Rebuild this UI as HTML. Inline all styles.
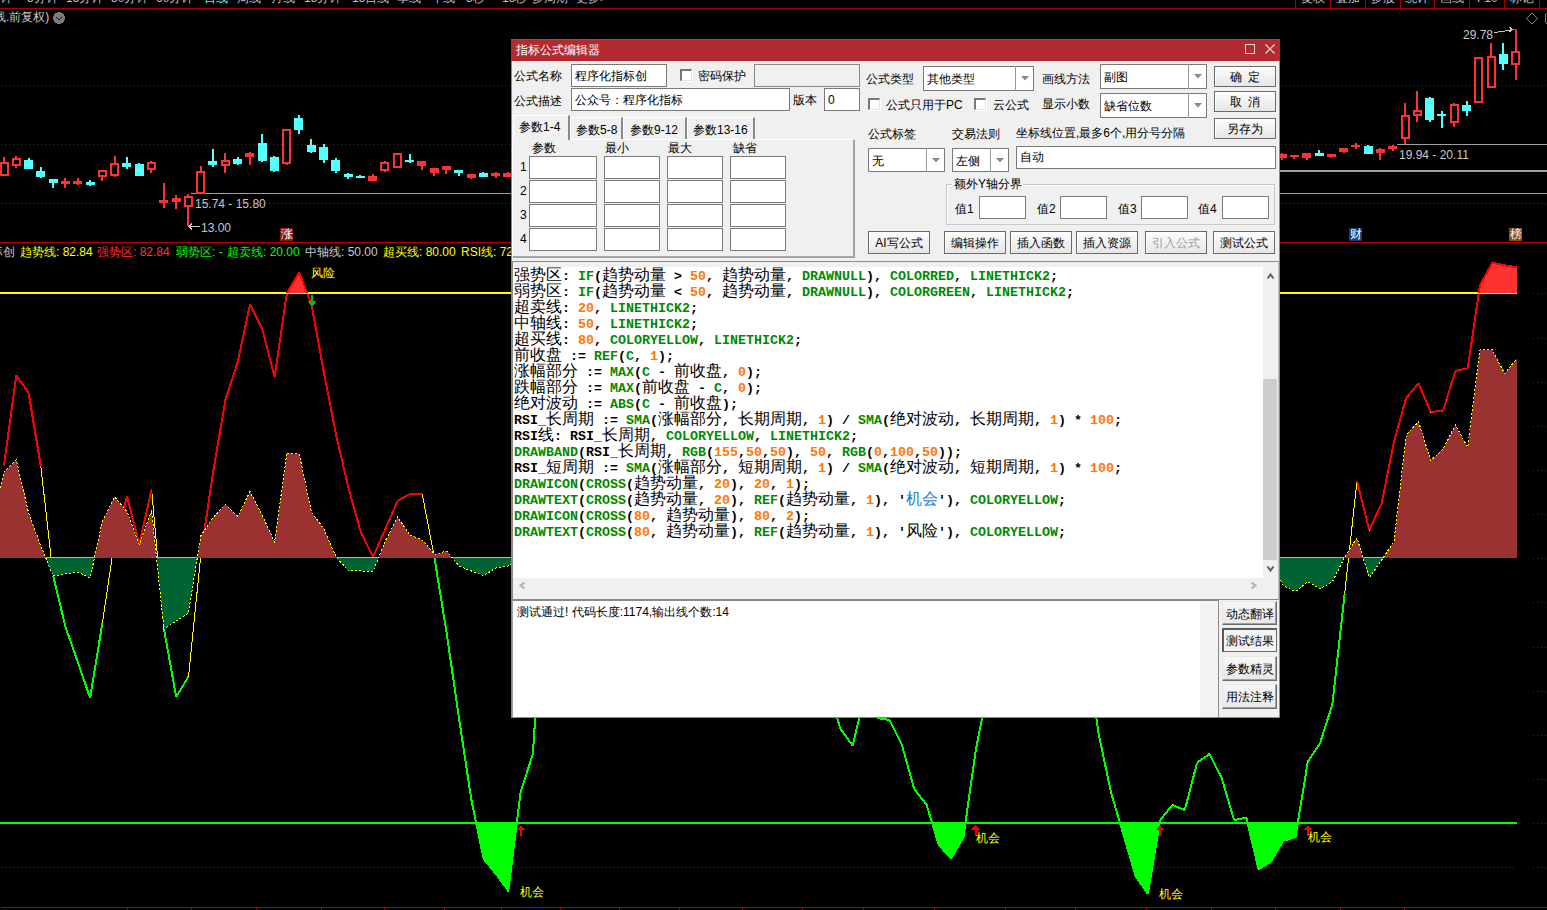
<!DOCTYPE html><html><head><meta charset="utf-8"><style>
html,body{margin:0;padding:0;background:#000;width:1547px;height:910px;overflow:hidden;position:relative}
.t{position:absolute;white-space:pre;line-height:16px;font-family:"Liberation Sans",sans-serif}
.cl{position:absolute;left:514px;white-space:pre;height:16px;line-height:16px;font-family:"Liberation Mono",monospace;font-weight:bold;font-size:13.333px;color:#000}
.cl .cj{font-family:"Liberation Sans",sans-serif;font-weight:normal;font-size:16px;line-height:16px}
</style></head><body><svg width="1547" height="910" style="position:absolute;left:0;top:0" shape-rendering="crispEdges">
<defs><clipPath id="above80"><rect x="0" y="0" width="1517" height="293.0"/></clipPath><clipPath id="below20"><rect x="0" y="823.0" width="1517" height="200"/></clipPath><clipPath id="above50"><rect x="0" y="243" width="1517" height="315"/></clipPath><clipPath id="below50"><rect x="0" y="557.5" width="1517" height="400"/></clipPath></defs>
<rect x="0" y="8" width="1547" height="1" fill="#a80000"/>
<rect x="1295" y="0" width="1" height="8" fill="#a80000"/>
<rect x="1330" y="0" width="1" height="8" fill="#a80000"/>
<rect x="1365" y="0" width="1" height="8" fill="#a80000"/>
<rect x="1400" y="0" width="1" height="8" fill="#a80000"/>
<rect x="1434" y="0" width="1" height="8" fill="#a80000"/>
<rect x="1469" y="0" width="1" height="8" fill="#a80000"/>
<rect x="1504" y="0" width="1" height="8" fill="#a80000"/>
<rect x="1539" y="0" width="1" height="8" fill="#a80000"/>
<line x1="1" y1="85.5" x2="1547" y2="85.5" stroke="#c00000" stroke-width="1" stroke-dasharray="1,3"/>
<line x1="1" y1="144.5" x2="1547" y2="144.5" stroke="#c00000" stroke-width="1" stroke-dasharray="1,3"/>
<line x1="1" y1="203.5" x2="1547" y2="203.5" stroke="#c00000" stroke-width="1" stroke-dasharray="1,3"/>
<rect x="191" y="193" width="1356" height="1" fill="#a0a0a0"/>
<rect x="1397" y="144" width="150" height="1" fill="#a0a0a0"/>
<rect x="1280" y="170" width="267" height="2" fill="#a0a0a0"/>
<rect x="3" y="157" width="2" height="19" fill="#ff3232"/>
<rect x="1" y="163" width="7" height="12" fill="#000" stroke="#ff3232" stroke-width="2"/>
<rect x="15" y="156" width="2" height="12" fill="#ff3232"/>
<rect x="13" y="159" width="7" height="6" fill="#000" stroke="#ff3232" stroke-width="2"/>
<rect x="28" y="158" width="2" height="11" fill="#54ffff"/>
<rect x="24" y="160" width="9" height="9" fill="#54ffff"/>
<rect x="40" y="167" width="2" height="11" fill="#54ffff"/>
<rect x="36" y="171" width="9" height="6" fill="#54ffff"/>
<rect x="52" y="179" width="2" height="9" fill="#54ffff"/>
<rect x="49" y="179" width="9" height="4" fill="#54ffff"/>
<rect x="64" y="178" width="2" height="10" fill="#ff3232"/>
<rect x="61" y="181" width="9" height="3" fill="#ff3232"/>
<rect x="77" y="178" width="2" height="7" fill="#ff3232"/>
<rect x="73" y="181" width="9" height="3" fill="#ff3232"/>
<rect x="89" y="180" width="2" height="6" fill="#54ffff"/>
<rect x="86" y="182" width="9" height="3" fill="#54ffff"/>
<rect x="101" y="170" width="2" height="11" fill="#ff3232"/>
<rect x="99" y="171" width="7" height="5" fill="#000" stroke="#ff3232" stroke-width="2"/>
<rect x="114" y="156" width="2" height="21" fill="#ff3232"/>
<rect x="111" y="164" width="7" height="11" fill="#000" stroke="#ff3232" stroke-width="2"/>
<rect x="126" y="157" width="2" height="12" fill="#54ffff"/>
<rect x="122" y="163" width="9" height="4" fill="#54ffff"/>
<rect x="138" y="163" width="2" height="13" fill="#54ffff"/>
<rect x="135" y="164" width="9" height="12" fill="#54ffff"/>
<rect x="150" y="161" width="2" height="12" fill="#ff3232"/>
<rect x="148" y="163" width="7" height="6" fill="#000" stroke="#ff3232" stroke-width="2"/>
<rect x="163" y="183" width="2" height="25" fill="#ff3232"/>
<rect x="159" y="200" width="9" height="3" fill="#ff3232"/>
<rect x="175" y="195" width="2" height="14" fill="#ff3232"/>
<rect x="172" y="198" width="9" height="4" fill="#ff3232"/>
<rect x="187" y="194" width="2" height="32" fill="#ff3232"/>
<rect x="185" y="197" width="7" height="9" fill="#000" stroke="#ff3232" stroke-width="2"/>
<rect x="200" y="166" width="2" height="28" fill="#ff3232"/>
<rect x="197" y="172" width="7" height="21" fill="#000" stroke="#ff3232" stroke-width="2"/>
<rect x="212" y="149" width="2" height="18" fill="#54ffff"/>
<rect x="208" y="161" width="9" height="4" fill="#54ffff"/>
<rect x="224" y="153" width="2" height="20" fill="#ff3232"/>
<rect x="222" y="161" width="7" height="4" fill="#000" stroke="#ff3232" stroke-width="2"/>
<rect x="237" y="157" width="2" height="8" fill="#54ffff"/>
<rect x="233" y="159" width="9" height="5" fill="#54ffff"/>
<rect x="249" y="152" width="2" height="13" fill="#ff3232"/>
<rect x="245" y="153" width="9" height="4" fill="#ff3232"/>
<rect x="261" y="134" width="2" height="28" fill="#54ffff"/>
<rect x="258" y="143" width="9" height="18" fill="#54ffff"/>
<rect x="273" y="156" width="2" height="16" fill="#54ffff"/>
<rect x="270" y="157" width="9" height="14" fill="#54ffff"/>
<rect x="286" y="129" width="2" height="36" fill="#ff3232"/>
<rect x="283" y="130" width="7" height="33" fill="#000" stroke="#ff3232" stroke-width="2"/>
<rect x="298" y="115" width="2" height="19" fill="#54ffff"/>
<rect x="294" y="118" width="9" height="12" fill="#54ffff"/>
<rect x="310" y="139" width="2" height="14" fill="#54ffff"/>
<rect x="307" y="145" width="9" height="7" fill="#54ffff"/>
<rect x="323" y="144" width="2" height="19" fill="#54ffff"/>
<rect x="319" y="147" width="9" height="13" fill="#54ffff"/>
<rect x="335" y="158" width="2" height="15" fill="#54ffff"/>
<rect x="331" y="160" width="9" height="11" fill="#54ffff"/>
<rect x="347" y="173" width="2" height="6" fill="#54ffff"/>
<rect x="344" y="174" width="9" height="3" fill="#54ffff"/>
<rect x="359" y="175" width="2" height="3" fill="#54ffff"/>
<rect x="356" y="176" width="9" height="2" fill="#54ffff"/>
<rect x="372" y="174" width="2" height="7" fill="#ff3232"/>
<rect x="368" y="176" width="9" height="5" fill="#ff3232"/>
<rect x="384" y="161" width="2" height="11" fill="#ff3232"/>
<rect x="381" y="163" width="7" height="7" fill="#000" stroke="#ff3232" stroke-width="2"/>
<rect x="396" y="153" width="2" height="15" fill="#ff3232"/>
<rect x="394" y="154" width="7" height="13" fill="#000" stroke="#ff3232" stroke-width="2"/>
<rect x="409" y="154" width="2" height="9" fill="#54ffff"/>
<rect x="405" y="160" width="9" height="2" fill="#54ffff"/>
<rect x="421" y="161" width="2" height="9" fill="#ff3232"/>
<rect x="417" y="161" width="9" height="5" fill="#ff3232"/>
<rect x="433" y="168" width="2" height="8" fill="#ff3232"/>
<rect x="430" y="168" width="9" height="5" fill="#ff3232"/>
<rect x="445" y="166" width="2" height="8" fill="#ff3232"/>
<rect x="442" y="166" width="9" height="4" fill="#ff3232"/>
<rect x="458" y="170" width="2" height="6" fill="#54ffff"/>
<rect x="454" y="170" width="9" height="3" fill="#54ffff"/>
<rect x="470" y="174" width="2" height="5" fill="#ff3232"/>
<rect x="467" y="174" width="9" height="4" fill="#ff3232"/>
<rect x="482" y="172" width="2" height="5" fill="#54ffff"/>
<rect x="479" y="173" width="9" height="4" fill="#54ffff"/>
<rect x="495" y="172" width="2" height="6" fill="#ff3232"/>
<rect x="491" y="173" width="9" height="3" fill="#ff3232"/>
<rect x="507" y="172" width="2" height="5" fill="#ff3232"/>
<rect x="503" y="173" width="9" height="4" fill="#ff3232"/>
<rect x="1281" y="153" width="2" height="7" fill="#ff3232"/>
<rect x="1278" y="154" width="9" height="4" fill="#ff3232"/>
<rect x="1293" y="155" width="2" height="4" fill="#ff3232"/>
<rect x="1290" y="155" width="9" height="2" fill="#ff3232"/>
<rect x="1306" y="153" width="2" height="7" fill="#ff3232"/>
<rect x="1302" y="153" width="9" height="5" fill="#ff3232"/>
<rect x="1318" y="150" width="2" height="6" fill="#54ffff"/>
<rect x="1315" y="153" width="9" height="3" fill="#54ffff"/>
<rect x="1330" y="154" width="2" height="4" fill="#ff3232"/>
<rect x="1327" y="154" width="9" height="3" fill="#ff3232"/>
<rect x="1343" y="148" width="2" height="5" fill="#ff3232"/>
<rect x="1339" y="148" width="9" height="4" fill="#ff3232"/>
<rect x="1355" y="143" width="2" height="6" fill="#ff3232"/>
<rect x="1351" y="145" width="9" height="2" fill="#ff3232"/>
<rect x="1367" y="145" width="2" height="9" fill="#54ffff"/>
<rect x="1364" y="146" width="9" height="8" fill="#54ffff"/>
<rect x="1379" y="148" width="2" height="12" fill="#ff3232"/>
<rect x="1376" y="149" width="9" height="4" fill="#ff3232"/>
<rect x="1392" y="145" width="2" height="6" fill="#ff3232"/>
<rect x="1388" y="146" width="9" height="3" fill="#ff3232"/>
<rect x="1404" y="103" width="2" height="41" fill="#ff3232"/>
<rect x="1402" y="116" width="7" height="22" fill="#000" stroke="#ff3232" stroke-width="2"/>
<rect x="1416" y="91" width="2" height="31" fill="#ff3232"/>
<rect x="1414" y="111" width="7" height="4" fill="#000" stroke="#ff3232" stroke-width="2"/>
<rect x="1429" y="97" width="2" height="25" fill="#54ffff"/>
<rect x="1425" y="98" width="9" height="22" fill="#54ffff"/>
<rect x="1441" y="111" width="2" height="17" fill="#54ffff"/>
<rect x="1437" y="114" width="9" height="2" fill="#54ffff"/>
<rect x="1453" y="103" width="2" height="24" fill="#ff3232"/>
<rect x="1451" y="105" width="7" height="17" fill="#000" stroke="#ff3232" stroke-width="2"/>
<rect x="1466" y="101" width="2" height="15" fill="#54ffff"/>
<rect x="1462" y="105" width="9" height="6" fill="#54ffff"/>
<rect x="1478" y="57" width="2" height="46" fill="#ff3232"/>
<rect x="1475" y="58" width="7" height="44" fill="#000" stroke="#ff3232" stroke-width="2"/>
<rect x="1490" y="43" width="2" height="45" fill="#ff3232"/>
<rect x="1488" y="57" width="7" height="30" fill="#000" stroke="#ff3232" stroke-width="2"/>
<rect x="1502" y="43" width="2" height="27" fill="#54ffff"/>
<rect x="1499" y="54" width="9" height="10" fill="#54ffff"/>
<rect x="1515" y="29" width="2" height="51" fill="#ff3232"/>
<rect x="1512" y="52" width="7" height="12" fill="#000" stroke="#ff3232" stroke-width="2"/>
<rect x="0" y="242" width="1547" height="1" fill="#b00000"/>
<line x1="1" y1="867.5" x2="1517" y2="867.5" stroke="#c00000" stroke-width="1" stroke-dasharray="1,3"/>
<line x1="1533" y1="293.5" x2="1547" y2="293.5" stroke="#c00000" stroke-width="1" stroke-dasharray="1,3"/>
<line x1="1533" y1="338.5" x2="1547" y2="338.5" stroke="#c00000" stroke-width="1" stroke-dasharray="1,3"/>
<line x1="1533" y1="382.5" x2="1547" y2="382.5" stroke="#c00000" stroke-width="1" stroke-dasharray="1,3"/>
<line x1="1533" y1="426.5" x2="1547" y2="426.5" stroke="#c00000" stroke-width="1" stroke-dasharray="1,3"/>
<line x1="1533" y1="470.5" x2="1547" y2="470.5" stroke="#c00000" stroke-width="1" stroke-dasharray="1,3"/>
<line x1="1533" y1="514.5" x2="1547" y2="514.5" stroke="#c00000" stroke-width="1" stroke-dasharray="1,3"/>
<line x1="1533" y1="558.5" x2="1547" y2="558.5" stroke="#c00000" stroke-width="1" stroke-dasharray="1,3"/>
<line x1="1533" y1="602.5" x2="1547" y2="602.5" stroke="#c00000" stroke-width="1" stroke-dasharray="1,3"/>
<line x1="1533" y1="647.5" x2="1547" y2="647.5" stroke="#c00000" stroke-width="1" stroke-dasharray="1,3"/>
<line x1="1533" y1="691.5" x2="1547" y2="691.5" stroke="#c00000" stroke-width="1" stroke-dasharray="1,3"/>
<line x1="1533" y1="735.5" x2="1547" y2="735.5" stroke="#c00000" stroke-width="1" stroke-dasharray="1,3"/>
<line x1="1533" y1="779.5" x2="1547" y2="779.5" stroke="#c00000" stroke-width="1" stroke-dasharray="1,3"/>
<line x1="1533" y1="823.5" x2="1547" y2="823.5" stroke="#c00000" stroke-width="1" stroke-dasharray="1,3"/>
<line x1="1533" y1="867.5" x2="1547" y2="867.5" stroke="#c00000" stroke-width="1" stroke-dasharray="1,3"/>
<polyline points="4.0,465.5 16.3,375.3 28.6,393.0 40.9,466.8 53.2,576.0 65.5,627.0 77.8,662.0 90.1,698.0 102.4,623.0 114.7,540.0 127.0,496.6 139.3,544.3 151.6,489.4 163.9,628.6 176.2,697.0 188.5,676.6 200.8,555.0 213.1,472.0 225.4,400.0 237.7,362.0 250.0,304.5 262.3,329.0 274.6,377.0 286.9,293.0 299.2,272.5 311.5,304.5 323.8,372.0 336.1,434.8 348.4,487.6 360.7,532.0 373.0,557.0 385.3,529.0 397.6,500.8 409.9,494.0 422.2,494.0 434.5,558.0 446.8,634.0 459.1,719.0 471.4,800.0 483.7,859.0 496.0,874.0 508.3,891.0 520.6,792.0 532.9,754.0 545.2,560.0 557.5,500.0 569.8,500.0 582.1,500.0 594.4,500.0 606.7,500.0 619.0,500.0 631.3,500.0 643.6,500.0 655.9,500.0 668.2,500.0 680.5,500.0 692.8,500.0 705.1,500.0 717.4,500.0 729.7,500.0 742.0,500.0 754.3,500.0 766.6,500.0 778.9,500.0 791.2,500.0 803.5,500.0 815.8,500.0 828.1,688.0 840.4,728.7 852.7,745.6 865.0,693.0 877.3,718.0 889.6,720.0 901.9,745.0 914.2,789.0 926.5,804.5 938.8,845.0 951.1,858.4 963.4,837.5 975.7,750.7 988.0,688.0 1000.3,550.0 1012.6,550.0 1024.9,550.0 1037.2,550.0 1049.5,550.0 1061.8,550.0 1074.1,550.0 1086.4,648.0 1098.7,734.0 1111.0,792.4 1123.3,834.0 1135.6,876.0 1147.9,894.0 1160.2,820.0 1172.5,805.0 1184.8,810.0 1197.1,762.7 1209.4,754.0 1221.7,778.0 1234.0,820.0 1246.3,817.7 1258.6,869.3 1270.9,861.6 1283.2,840.8 1295.5,837.0 1307.8,761.6 1320.1,743.0 1332.4,704.3 1344.7,593.5 1357.0,480.8 1369.3,530.0 1381.6,503.6 1393.9,442.0 1406.2,398.0 1418.5,383.4 1430.8,412.0 1443.1,410.5 1455.4,370.8 1467.7,368.3 1480.0,285.0 1492.3,262.8 1504.6,265.3 1516.9,267.4" fill="none" stroke="#ffff00" stroke-width="1"/>
<path d="M4.0,465.5 L16.3,375.3 M16.3,375.3 L28.6,393.0 M28.6,393.0 L40.9,466.8 M114.7,540.0 L127.0,496.6 M127.0,496.6 L139.3,544.3 M139.3,544.3 L151.6,489.4 M200.8,555.0 L213.1,472.0 M213.1,472.0 L225.4,400.0 M225.4,400.0 L237.7,362.0 M237.7,362.0 L250.0,304.5 M250.0,304.5 L262.3,329.0 M262.3,329.0 L274.6,377.0 M274.6,377.0 L286.9,293.0 M286.9,293.0 L299.2,272.5 M299.2,272.5 L311.5,304.5 M311.5,304.5 L323.8,372.0 M323.8,372.0 L336.1,434.8 M336.1,434.8 L348.4,487.6 M348.4,487.6 L360.7,532.0 M360.7,532.0 L373.0,557.0 M373.0,557.0 L385.3,529.0 M385.3,529.0 L397.6,500.8 M397.6,500.8 L409.9,494.0 M409.9,494.0 L422.2,494.0 M557.5,500.0 L569.8,500.0 M569.8,500.0 L582.1,500.0 M582.1,500.0 L594.4,500.0 M594.4,500.0 L606.7,500.0 M606.7,500.0 L619.0,500.0 M619.0,500.0 L631.3,500.0 M631.3,500.0 L643.6,500.0 M643.6,500.0 L655.9,500.0 M655.9,500.0 L668.2,500.0 M668.2,500.0 L680.5,500.0 M680.5,500.0 L692.8,500.0 M692.8,500.0 L705.1,500.0 M705.1,500.0 L717.4,500.0 M717.4,500.0 L729.7,500.0 M729.7,500.0 L742.0,500.0 M742.0,500.0 L754.3,500.0 M754.3,500.0 L766.6,500.0 M766.6,500.0 L778.9,500.0 M778.9,500.0 L791.2,500.0 M791.2,500.0 L803.5,500.0 M803.5,500.0 L815.8,500.0 M1000.3,550.0 L1012.6,550.0 M1012.6,550.0 L1024.9,550.0 M1024.9,550.0 L1037.2,550.0 M1037.2,550.0 L1049.5,550.0 M1049.5,550.0 L1061.8,550.0 M1061.8,550.0 L1074.1,550.0 M1357.0,480.8 L1369.3,530.0 M1369.3,530.0 L1381.6,503.6 M1381.6,503.6 L1393.9,442.0 M1393.9,442.0 L1406.2,398.0 M1406.2,398.0 L1418.5,383.4 M1418.5,383.4 L1430.8,412.0 M1430.8,412.0 L1443.1,410.5 M1443.1,410.5 L1455.4,370.8 M1455.4,370.8 L1467.7,368.3 M1467.7,368.3 L1480.0,285.0 M1480.0,285.0 L1492.3,262.8 M1492.3,262.8 L1504.6,265.3 M1504.6,265.3 L1516.9,267.4" fill="none" stroke="#ff0000" stroke-width="2" stroke-linejoin="round"/>
<path d="M53.2,576.0 L65.5,627.0 M65.5,627.0 L77.8,662.0 M77.8,662.0 L90.1,698.0 M90.1,698.0 L102.4,623.0 M163.9,628.6 L176.2,697.0 M176.2,697.0 L188.5,676.6 M434.5,558.0 L446.8,634.0 M446.8,634.0 L459.1,719.0 M459.1,719.0 L471.4,800.0 M471.4,800.0 L483.7,859.0 M483.7,859.0 L496.0,874.0 M496.0,874.0 L508.3,891.0 M508.3,891.0 L520.6,792.0 M520.6,792.0 L532.9,754.0 M532.9,754.0 L545.2,560.0 M828.1,688.0 L840.4,728.7 M840.4,728.7 L852.7,745.6 M852.7,745.6 L865.0,693.0 M865.0,693.0 L877.3,718.0 M877.3,718.0 L889.6,720.0 M889.6,720.0 L901.9,745.0 M901.9,745.0 L914.2,789.0 M914.2,789.0 L926.5,804.5 M926.5,804.5 L938.8,845.0 M938.8,845.0 L951.1,858.4 M951.1,858.4 L963.4,837.5 M963.4,837.5 L975.7,750.7 M975.7,750.7 L988.0,688.0 M1086.4,648.0 L1098.7,734.0 M1098.7,734.0 L1111.0,792.4 M1111.0,792.4 L1123.3,834.0 M1123.3,834.0 L1135.6,876.0 M1135.6,876.0 L1147.9,894.0 M1147.9,894.0 L1160.2,820.0 M1160.2,820.0 L1172.5,805.0 M1172.5,805.0 L1184.8,810.0 M1184.8,810.0 L1197.1,762.7 M1197.1,762.7 L1209.4,754.0 M1209.4,754.0 L1221.7,778.0 M1221.7,778.0 L1234.0,820.0 M1234.0,820.0 L1246.3,817.7 M1246.3,817.7 L1258.6,869.3 M1258.6,869.3 L1270.9,861.6 M1270.9,861.6 L1283.2,840.8 M1283.2,840.8 L1295.5,837.0 M1295.5,837.0 L1307.8,761.6 M1307.8,761.6 L1320.1,743.0 M1320.1,743.0 L1332.4,704.3 M1332.4,704.3 L1344.7,593.5" fill="none" stroke="#00ff00" stroke-width="2" stroke-linejoin="round"/>
<polygon points="0,557.5 0,488 4.0,472.0 16.3,460.0 28.6,513.0 40.9,546.0 53.2,576.0 65.5,574.0 77.8,572.0 90.1,578.0 102.4,521.0 114.7,497.0 127.0,511.6 139.3,544.5 151.6,510.4 163.9,629.0 176.2,621.0 188.5,613.0 200.8,535.7 213.1,517.7 225.4,504.4 237.7,516.3 250.0,491.6 262.3,515.6 274.6,542.0 286.9,453.0 299.2,454.0 311.5,512.0 323.8,528.8 336.1,557.0 348.4,570.6 360.7,571.0 373.0,571.7 385.3,541.0 397.6,517.0 409.9,535.0 422.2,540.0 434.5,554.5 446.8,551.0 459.1,566.0 471.4,571.0 483.7,575.7 496.0,567.8 508.3,566.0 520.6,560.0 532.9,560.0 545.2,560.0 557.5,560.0 569.8,560.0 582.1,560.0 594.4,560.0 606.7,560.0 619.0,560.0 631.3,560.0 643.6,560.0 655.9,560.0 668.2,560.0 680.5,560.0 692.8,560.0 705.1,560.0 717.4,560.0 729.7,560.0 742.0,560.0 754.3,560.0 766.6,560.0 778.9,560.0 791.2,560.0 803.5,560.0 815.8,560.0 828.1,560.0 840.4,560.0 852.7,560.0 865.0,560.0 877.3,560.0 889.6,560.0 901.9,560.0 914.2,560.0 926.5,560.0 938.8,560.0 951.1,560.0 963.4,560.0 975.7,560.0 988.0,560.0 1000.3,560.0 1012.6,560.0 1024.9,560.0 1037.2,560.0 1049.5,560.0 1061.8,560.0 1074.1,560.0 1086.4,560.0 1098.7,560.0 1111.0,560.0 1123.3,560.0 1135.6,560.0 1147.9,560.0 1160.2,560.0 1172.5,560.0 1184.8,560.0 1197.1,560.0 1209.4,560.0 1221.7,560.0 1234.0,560.0 1246.3,560.0 1258.6,560.0 1270.9,560.0 1283.2,585.6 1295.5,591.5 1307.8,581.7 1320.1,588.8 1332.4,581.7 1344.7,557.0 1357.0,538.0 1369.3,577.7 1381.6,560.0 1393.9,542.0 1406.2,435.0 1418.5,421.7 1430.8,460.7 1443.1,449.0 1455.4,425.0 1467.7,447.4 1480.0,349.7 1492.3,349.7 1504.6,373.6 1516.9,358.8 1516.9,557.5" fill="#006432" clip-path="url(#below50)"/>
<rect x="0" y="557" width="1517" height="1" fill="#b4b4b4"/>
<polygon points="0,558 0,488 4.0,472.0 16.3,460.0 28.6,513.0 40.9,546.0 53.2,576.0 65.5,574.0 77.8,572.0 90.1,578.0 102.4,521.0 114.7,497.0 127.0,511.6 139.3,544.5 151.6,510.4 163.9,629.0 176.2,621.0 188.5,613.0 200.8,535.7 213.1,517.7 225.4,504.4 237.7,516.3 250.0,491.6 262.3,515.6 274.6,542.0 286.9,453.0 299.2,454.0 311.5,512.0 323.8,528.8 336.1,557.0 348.4,570.6 360.7,571.0 373.0,571.7 385.3,541.0 397.6,517.0 409.9,535.0 422.2,540.0 434.5,554.5 446.8,551.0 459.1,566.0 471.4,571.0 483.7,575.7 496.0,567.8 508.3,566.0 520.6,560.0 532.9,560.0 545.2,560.0 557.5,560.0 569.8,560.0 582.1,560.0 594.4,560.0 606.7,560.0 619.0,560.0 631.3,560.0 643.6,560.0 655.9,560.0 668.2,560.0 680.5,560.0 692.8,560.0 705.1,560.0 717.4,560.0 729.7,560.0 742.0,560.0 754.3,560.0 766.6,560.0 778.9,560.0 791.2,560.0 803.5,560.0 815.8,560.0 828.1,560.0 840.4,560.0 852.7,560.0 865.0,560.0 877.3,560.0 889.6,560.0 901.9,560.0 914.2,560.0 926.5,560.0 938.8,560.0 951.1,560.0 963.4,560.0 975.7,560.0 988.0,560.0 1000.3,560.0 1012.6,560.0 1024.9,560.0 1037.2,560.0 1049.5,560.0 1061.8,560.0 1074.1,560.0 1086.4,560.0 1098.7,560.0 1111.0,560.0 1123.3,560.0 1135.6,560.0 1147.9,560.0 1160.2,560.0 1172.5,560.0 1184.8,560.0 1197.1,560.0 1209.4,560.0 1221.7,560.0 1234.0,560.0 1246.3,560.0 1258.6,560.0 1270.9,560.0 1283.2,585.6 1295.5,591.5 1307.8,581.7 1320.1,588.8 1332.4,581.7 1344.7,557.0 1357.0,538.0 1369.3,577.7 1381.6,560.0 1393.9,542.0 1406.2,435.0 1418.5,421.7 1430.8,460.7 1443.1,449.0 1455.4,425.0 1467.7,447.4 1480.0,349.7 1492.3,349.7 1504.6,373.6 1516.9,358.8 1516.9,558" fill="#9b3232" clip-path="url(#above50)"/>
<polyline points="0,488 4.0,472.0 16.3,460.0 28.6,513.0 40.9,546.0 53.2,576.0 65.5,574.0 77.8,572.0 90.1,578.0 102.4,521.0 114.7,497.0 127.0,511.6 139.3,544.5 151.6,510.4 163.9,629.0 176.2,621.0 188.5,613.0 200.8,535.7 213.1,517.7 225.4,504.4 237.7,516.3 250.0,491.6 262.3,515.6 274.6,542.0 286.9,453.0 299.2,454.0 311.5,512.0 323.8,528.8 336.1,557.0 348.4,570.6 360.7,571.0 373.0,571.7 385.3,541.0 397.6,517.0 409.9,535.0 422.2,540.0 434.5,554.5 446.8,551.0 459.1,566.0 471.4,571.0 483.7,575.7 496.0,567.8 508.3,566.0 520.6,560.0 532.9,560.0 545.2,560.0 557.5,560.0 569.8,560.0 582.1,560.0 594.4,560.0 606.7,560.0 619.0,560.0 631.3,560.0 643.6,560.0 655.9,560.0 668.2,560.0 680.5,560.0 692.8,560.0 705.1,560.0 717.4,560.0 729.7,560.0 742.0,560.0 754.3,560.0 766.6,560.0 778.9,560.0 791.2,560.0 803.5,560.0 815.8,560.0 828.1,560.0 840.4,560.0 852.7,560.0 865.0,560.0 877.3,560.0 889.6,560.0 901.9,560.0 914.2,560.0 926.5,560.0 938.8,560.0 951.1,560.0 963.4,560.0 975.7,560.0 988.0,560.0 1000.3,560.0 1012.6,560.0 1024.9,560.0 1037.2,560.0 1049.5,560.0 1061.8,560.0 1074.1,560.0 1086.4,560.0 1098.7,560.0 1111.0,560.0 1123.3,560.0 1135.6,560.0 1147.9,560.0 1160.2,560.0 1172.5,560.0 1184.8,560.0 1197.1,560.0 1209.4,560.0 1221.7,560.0 1234.0,560.0 1246.3,560.0 1258.6,560.0 1270.9,560.0 1283.2,585.6 1295.5,591.5 1307.8,581.7 1320.1,588.8 1332.4,581.7 1344.7,557.0 1357.0,538.0 1369.3,577.7 1381.6,560.0 1393.9,542.0 1406.2,435.0 1418.5,421.7 1430.8,460.7 1443.1,449.0 1455.4,425.0 1467.7,447.4 1480.0,349.7 1492.3,349.7 1504.6,373.6 1516.9,358.8" fill="none" stroke="#ffff00" stroke-width="1" stroke-dasharray="2,2"/>
<rect x="0" y="292" width="1517" height="2" fill="#ffff00"/>
<rect x="0" y="822" width="1517" height="2" fill="#00ff00"/>
<polygon points="4.0,293.0 4.0,465.5 16.3,375.3 28.6,393.0 40.9,466.8 53.2,576.0 65.5,627.0 77.8,662.0 90.1,698.0 102.4,623.0 114.7,540.0 127.0,496.6 139.3,544.3 151.6,489.4 163.9,628.6 176.2,697.0 188.5,676.6 200.8,555.0 213.1,472.0 225.4,400.0 237.7,362.0 250.0,304.5 262.3,329.0 274.6,377.0 286.9,293.0 299.2,272.5 311.5,304.5 323.8,372.0 336.1,434.8 348.4,487.6 360.7,532.0 373.0,557.0 385.3,529.0 397.6,500.8 409.9,494.0 422.2,494.0 434.5,558.0 446.8,634.0 459.1,719.0 471.4,800.0 483.7,859.0 496.0,874.0 508.3,891.0 520.6,792.0 532.9,754.0 545.2,560.0 557.5,500.0 569.8,500.0 582.1,500.0 594.4,500.0 606.7,500.0 619.0,500.0 631.3,500.0 643.6,500.0 655.9,500.0 668.2,500.0 680.5,500.0 692.8,500.0 705.1,500.0 717.4,500.0 729.7,500.0 742.0,500.0 754.3,500.0 766.6,500.0 778.9,500.0 791.2,500.0 803.5,500.0 815.8,500.0 828.1,688.0 840.4,728.7 852.7,745.6 865.0,693.0 877.3,718.0 889.6,720.0 901.9,745.0 914.2,789.0 926.5,804.5 938.8,845.0 951.1,858.4 963.4,837.5 975.7,750.7 988.0,688.0 1000.3,550.0 1012.6,550.0 1024.9,550.0 1037.2,550.0 1049.5,550.0 1061.8,550.0 1074.1,550.0 1086.4,648.0 1098.7,734.0 1111.0,792.4 1123.3,834.0 1135.6,876.0 1147.9,894.0 1160.2,820.0 1172.5,805.0 1184.8,810.0 1197.1,762.7 1209.4,754.0 1221.7,778.0 1234.0,820.0 1246.3,817.7 1258.6,869.3 1270.9,861.6 1283.2,840.8 1295.5,837.0 1307.8,761.6 1320.1,743.0 1332.4,704.3 1344.7,593.5 1357.0,480.8 1369.3,530.0 1381.6,503.6 1393.9,442.0 1406.2,398.0 1418.5,383.4 1430.8,412.0 1443.1,410.5 1455.4,370.8 1467.7,368.3 1480.0,285.0 1492.3,262.8 1504.6,265.3 1516.9,267.4 1516.9,293.0" fill="#ff3232" clip-path="url(#above80)"/>
<path d="M4.0,465.5 L16.3,375.3 M16.3,375.3 L28.6,393.0 M28.6,393.0 L40.9,466.8 M114.7,540.0 L127.0,496.6 M127.0,496.6 L139.3,544.3 M139.3,544.3 L151.6,489.4 M200.8,555.0 L213.1,472.0 M213.1,472.0 L225.4,400.0 M225.4,400.0 L237.7,362.0 M237.7,362.0 L250.0,304.5 M250.0,304.5 L262.3,329.0 M262.3,329.0 L274.6,377.0 M274.6,377.0 L286.9,293.0 M286.9,293.0 L299.2,272.5 M299.2,272.5 L311.5,304.5 M311.5,304.5 L323.8,372.0 M323.8,372.0 L336.1,434.8 M336.1,434.8 L348.4,487.6 M348.4,487.6 L360.7,532.0 M360.7,532.0 L373.0,557.0 M373.0,557.0 L385.3,529.0 M385.3,529.0 L397.6,500.8 M397.6,500.8 L409.9,494.0 M409.9,494.0 L422.2,494.0 M557.5,500.0 L569.8,500.0 M569.8,500.0 L582.1,500.0 M582.1,500.0 L594.4,500.0 M594.4,500.0 L606.7,500.0 M606.7,500.0 L619.0,500.0 M619.0,500.0 L631.3,500.0 M631.3,500.0 L643.6,500.0 M643.6,500.0 L655.9,500.0 M655.9,500.0 L668.2,500.0 M668.2,500.0 L680.5,500.0 M680.5,500.0 L692.8,500.0 M692.8,500.0 L705.1,500.0 M705.1,500.0 L717.4,500.0 M717.4,500.0 L729.7,500.0 M729.7,500.0 L742.0,500.0 M742.0,500.0 L754.3,500.0 M754.3,500.0 L766.6,500.0 M766.6,500.0 L778.9,500.0 M778.9,500.0 L791.2,500.0 M791.2,500.0 L803.5,500.0 M803.5,500.0 L815.8,500.0 M1000.3,550.0 L1012.6,550.0 M1012.6,550.0 L1024.9,550.0 M1024.9,550.0 L1037.2,550.0 M1037.2,550.0 L1049.5,550.0 M1049.5,550.0 L1061.8,550.0 M1061.8,550.0 L1074.1,550.0 M1357.0,480.8 L1369.3,530.0 M1369.3,530.0 L1381.6,503.6 M1381.6,503.6 L1393.9,442.0 M1393.9,442.0 L1406.2,398.0 M1406.2,398.0 L1418.5,383.4 M1418.5,383.4 L1430.8,412.0 M1430.8,412.0 L1443.1,410.5 M1443.1,410.5 L1455.4,370.8 M1455.4,370.8 L1467.7,368.3 M1467.7,368.3 L1480.0,285.0 M1480.0,285.0 L1492.3,262.8 M1492.3,262.8 L1504.6,265.3 M1504.6,265.3 L1516.9,267.4" fill="none" stroke="#ff0000" stroke-width="2" stroke-linejoin="round" clip-path="url(#above80)"/>
<polygon points="4.0,823.0 4.0,465.5 16.3,375.3 28.6,393.0 40.9,466.8 53.2,576.0 65.5,627.0 77.8,662.0 90.1,698.0 102.4,623.0 114.7,540.0 127.0,496.6 139.3,544.3 151.6,489.4 163.9,628.6 176.2,697.0 188.5,676.6 200.8,555.0 213.1,472.0 225.4,400.0 237.7,362.0 250.0,304.5 262.3,329.0 274.6,377.0 286.9,293.0 299.2,272.5 311.5,304.5 323.8,372.0 336.1,434.8 348.4,487.6 360.7,532.0 373.0,557.0 385.3,529.0 397.6,500.8 409.9,494.0 422.2,494.0 434.5,558.0 446.8,634.0 459.1,719.0 471.4,800.0 483.7,859.0 496.0,874.0 508.3,891.0 520.6,792.0 532.9,754.0 545.2,560.0 557.5,500.0 569.8,500.0 582.1,500.0 594.4,500.0 606.7,500.0 619.0,500.0 631.3,500.0 643.6,500.0 655.9,500.0 668.2,500.0 680.5,500.0 692.8,500.0 705.1,500.0 717.4,500.0 729.7,500.0 742.0,500.0 754.3,500.0 766.6,500.0 778.9,500.0 791.2,500.0 803.5,500.0 815.8,500.0 828.1,688.0 840.4,728.7 852.7,745.6 865.0,693.0 877.3,718.0 889.6,720.0 901.9,745.0 914.2,789.0 926.5,804.5 938.8,845.0 951.1,858.4 963.4,837.5 975.7,750.7 988.0,688.0 1000.3,550.0 1012.6,550.0 1024.9,550.0 1037.2,550.0 1049.5,550.0 1061.8,550.0 1074.1,550.0 1086.4,648.0 1098.7,734.0 1111.0,792.4 1123.3,834.0 1135.6,876.0 1147.9,894.0 1160.2,820.0 1172.5,805.0 1184.8,810.0 1197.1,762.7 1209.4,754.0 1221.7,778.0 1234.0,820.0 1246.3,817.7 1258.6,869.3 1270.9,861.6 1283.2,840.8 1295.5,837.0 1307.8,761.6 1320.1,743.0 1332.4,704.3 1344.7,593.5 1357.0,480.8 1369.3,530.0 1381.6,503.6 1393.9,442.0 1406.2,398.0 1418.5,383.4 1430.8,412.0 1443.1,410.5 1455.4,370.8 1467.7,368.3 1480.0,285.0 1492.3,262.8 1504.6,265.3 1516.9,267.4 1516.9,823.0" fill="#00ff00" stroke="#00ff00" stroke-width="1" clip-path="url(#below20)"/>
<rect x="1" y="907" width="1546" height="1" fill="#b00000"/>
<rect x="127" y="907" width="1" height="3" fill="#b00000"/>
<rect x="191" y="907" width="1" height="3" fill="#b00000"/>
<rect x="256" y="907" width="1" height="3" fill="#b00000"/>
<rect x="321" y="907" width="1" height="3" fill="#b00000"/>
<rect x="384" y="907" width="1" height="3" fill="#b00000"/>
<rect x="444" y="907" width="1" height="3" fill="#b00000"/>
<rect x="501" y="907" width="1" height="3" fill="#b00000"/>
<rect x="560" y="907" width="1" height="3" fill="#b00000"/>
<rect x="619" y="907" width="1" height="3" fill="#b00000"/>
<rect x="679" y="907" width="1" height="3" fill="#b00000"/>
<rect x="742" y="907" width="1" height="3" fill="#b00000"/>
<rect x="802" y="907" width="1" height="3" fill="#b00000"/>
<rect x="863" y="907" width="1" height="3" fill="#b00000"/>
<rect x="934" y="907" width="1" height="3" fill="#b00000"/>
<rect x="1005" y="907" width="1" height="3" fill="#b00000"/>
<rect x="1075" y="907" width="1" height="3" fill="#b00000"/>
<rect x="1146" y="907" width="1" height="3" fill="#b00000"/>
<rect x="1211" y="907" width="1" height="3" fill="#b00000"/>
<rect x="1275" y="907" width="1" height="3" fill="#b00000"/>
<rect x="1340" y="907" width="1" height="3" fill="#b00000"/>
<rect x="1404" y="907" width="1" height="3" fill="#b00000"/>
<rect x="311" y="295" width="2" height="7" fill="#00c000"/>
<polygon points="307.5,301 316.5,301 312,307" fill="#00c000"/>
<polygon points="521.0,825 516.5,830 525.5,830" fill="#ff0000"/>
<rect x="520.0" y="829" width="2" height="7" fill="#ff0000"/>
<polygon points="975.5,825 971.0,830 980.0,830" fill="#ff0000"/>
<rect x="974.5" y="829" width="2" height="7" fill="#ff0000"/>
<polygon points="1160.0,825 1155.5,830 1164.5,830" fill="#ff0000"/>
<rect x="1159.0" y="829" width="2" height="7" fill="#ff0000"/>
<polygon points="1308.0,825 1303.5,830 1312.5,830" fill="#ff0000"/>
<rect x="1307.0" y="829" width="2" height="7" fill="#ff0000"/>
<polygon points="1532,13 1537.5,18.5 1532,24 1526.5,18.5" fill="none" stroke="#808080" stroke-width="1"/>
<rect x="1545.5" y="13.5" width="6" height="10" rx="2" fill="none" stroke="#808080" stroke-width="1"/>
<circle cx="59" cy="18" r="6" fill="#7a7a7a"/>
<polyline points="56,17 59,20 62,17" fill="none" stroke="#1a1a1a" stroke-width="1"/>
<line x1="189" y1="226.5" x2="200" y2="226.5" stroke="#c8c8c8" stroke-width="1"/>
<polyline points="192,223.5 189,226.5 192,229.5" fill="none" stroke="#c8c8c8" stroke-width="1"/>
<polyline points="1494,32.5 1502,31.5 1513,29.5" fill="none" stroke="#c8c8c8" stroke-width="1"/>
<polyline points="1509,27 1513,29.5 1509,32" fill="none" stroke="#c8c8c8" stroke-width="1"/>
</svg>
<div class="t" style="left:-12px;top:-10.0px;font-size:12px;color:#c0c0c0;">分钟</div>
<div class="t" style="left:27px;top:-10.0px;font-size:12px;color:#c0c0c0;">5分钟</div>
<div class="t" style="left:66px;top:-10.0px;font-size:12px;color:#c0c0c0;">15分钟</div>
<div class="t" style="left:111px;top:-10.0px;font-size:12px;color:#c0c0c0;">30分钟</div>
<div class="t" style="left:156px;top:-10.0px;font-size:12px;color:#c0c0c0;">60分钟</div>
<div class="t" style="left:204px;top:-10.0px;font-size:12px;color:#54ffff;">日线</div>
<div class="t" style="left:237px;top:-10.0px;font-size:12px;color:#c0c0c0;">周线</div>
<div class="t" style="left:271px;top:-10.0px;font-size:12px;color:#c0c0c0;">月线</div>
<div class="t" style="left:304px;top:-10.0px;font-size:12px;color:#c0c0c0;">15分钟</div>
<div class="t" style="left:352px;top:-10.0px;font-size:12px;color:#c0c0c0;">15日线</div>
<div class="t" style="left:397px;top:-10.0px;font-size:12px;color:#c0c0c0;">季线</div>
<div class="t" style="left:431px;top:-10.0px;font-size:12px;color:#c0c0c0;">年线</div>
<div class="t" style="left:466px;top:-10.0px;font-size:12px;color:#c0c0c0;">5秒</div>
<div class="t" style="left:502px;top:-10.0px;font-size:12px;color:#c0c0c0;">15秒</div>
<div class="t" style="left:532px;top:-10.0px;font-size:12px;color:#c0c0c0;">多周期</div>
<div class="t" style="left:576px;top:-10.0px;font-size:12px;color:#c0c0c0;">更多&gt;</div>
<div class="t" style="left:1301px;top:-10.0px;font-size:12px;color:#c0c0c0;">复权</div>
<div class="t" style="left:1336px;top:-10.0px;font-size:12px;color:#c0c0c0;">叠加</div>
<div class="t" style="left:1371px;top:-10.0px;font-size:12px;color:#c0c0c0;">多股</div>
<div class="t" style="left:1405px;top:-10.0px;font-size:12px;color:#c0c0c0;">统计</div>
<div class="t" style="left:1440px;top:-10.0px;font-size:12px;color:#c0c0c0;">画线</div>
<div class="t" style="left:1477px;top:-10.0px;font-size:12px;color:#c0c0c0;">F10</div>
<div class="t" style="left:1510px;top:-10.0px;font-size:12px;color:#c0c0c0;">标记</div>
<div class="t" style="left:-6px;top:9.0px;font-size:12px;color:#c8c8c8;">线.前复权)</div>
<div class="t" style="left:195px;top:195.5px;font-size:12px;color:#c8c8c8;">15.74 - 15.80</div>
<div class="t" style="left:201px;top:219.5px;font-size:12px;color:#c8c8c8;">13.00</div>
<div class="t" style="left:1463px;top:26.5px;font-size:12px;color:#c8c8c8;">29.78</div>
<div class="t" style="left:1399px;top:146.5px;font-size:12px;color:#c8c8c8;">19.94 - 20.11</div>
<div class="t" style="left:280px;top:228px;width:13px;height:13px;background:#8c1414;color:#fff;font-size:12px;line-height:13px;text-align:center">涨</div>
<div class="t" style="left:1349px;top:228px;width:13px;height:13px;background:#143c78;color:#fff;font-size:12px;line-height:13px;text-align:center">财</div>
<div class="t" style="left:1509px;top:228px;width:13px;height:13px;background:#8b4a10;color:#fff;font-size:12px;line-height:13px;text-align:center">榜</div>
<div class="t" style="left:-9px;top:243.5px;font-size:12px;color:#c8c8c8;">标创</div>
<div class="t" style="left:20px;top:243.5px;font-size:12px;color:#ffff00;">趋势线: 82.84</div>
<div class="t" style="left:97px;top:243.5px;font-size:12px;color:#ff3232;">强势区: 82.84</div>
<div class="t" style="left:176px;top:243.5px;font-size:12px;color:#00ff00;">弱势区: -</div>
<div class="t" style="left:227px;top:243.5px;font-size:12px;color:#00ff00;">超卖线: 20.00</div>
<div class="t" style="left:305px;top:243.5px;font-size:12px;color:#c8c8c8;">中轴线: 50.00</div>
<div class="t" style="left:383px;top:243.5px;font-size:12px;color:#ffff00;">超买线: 80.00</div>
<div class="t" style="left:461px;top:243.5px;font-size:12px;color:#ffff00;">RSI线: 72.00</div>
<div class="t" style="left:311px;top:264.5px;font-size:12px;color:#ffff00;">风险</div>
<div class="t" style="left:520px;top:883.5px;font-size:12px;color:#ffff00;">机会</div>
<div class="t" style="left:976px;top:829.5px;font-size:12px;color:#ffff00;">机会</div>
<div class="t" style="left:1159px;top:885.5px;font-size:12px;color:#ffff00;">机会</div>
<div class="t" style="left:1308px;top:828.5px;font-size:12px;color:#ffff00;">机会</div>
<div style="position:absolute;left:511px;top:39px;width:769px;height:679px;box-sizing:border-box;background:#f0f0f0;border:1px solid #8a8a8a;border-top:none;"></div>
<div style="position:absolute;left:511px;top:39px;width:769px;height:22px;box-sizing:border-box;background:#b22b31;border-top:1px solid #c63a3f;"></div>
<div class="t" style="left:516px;top:41.5px;font-size:12px;color:#ffffff;">指标公式编辑器</div>
<div style="position:absolute;left:1245px;top:44px;width:10px;height:10px;box-sizing:border-box;border:1px solid #eadada;"></div>
<svg style="position:absolute;left:1264px;top:43px" width="12" height="12"><path d="M1.5,1.5 L10.5,10.5 M10.5,1.5 L1.5,10.5" stroke="#f0e0e0" stroke-width="1.1"/></svg>
<div class="t" style="left:514px;top:67.5px;font-size:12px;color:#000;">公式名称</div>
<div style="position:absolute;left:571px;top:64px;width:96px;height:23px;box-sizing:border-box;background:#fff;border:1px solid #7a7a7a;"></div>
<div class="t" style="left:575px;top:67.5px;font-size:12px;color:#000;">程序化指标创</div>
<div style="position:absolute;left:680px;top:69px;width:12px;height:12px;box-sizing:border-box;background:#fff;border-top:2px solid #787878;border-left:2px solid #787878;border-right:1px solid #e3e3e3;border-bottom:1px solid #e3e3e3;box-shadow:1px 1px 0 #fff;"></div>
<div class="t" style="left:698px;top:67.5px;font-size:12px;color:#000;">密码保护</div>
<div style="position:absolute;left:754px;top:64px;width:106px;height:23px;box-sizing:border-box;background:#f0f0f0;border:1px solid #8a8a8a;"></div>
<div class="t" style="left:866px;top:70.5px;font-size:12px;color:#000;">公式类型</div>
<div style="position:absolute;left:923px;top:66px;width:111px;height:25px;box-sizing:border-box;background:#fff;border:1px solid #7a7a7a;"></div>
<div style="position:absolute;left:1015px;top:66px;width:1px;height:25px;box-sizing:border-box;background:#9a9a9a;"></div>
<svg style="position:absolute;left:1020.5px;top:76.0px" width="9" height="5"><polygon points="0,0 8,0 4,4.5" fill="#8a8a8a"/></svg>
<div class="t" style="left:927px;top:71.0px;font-size:12px;color:#000;">其他类型</div>
<div class="t" style="left:1042px;top:70.5px;font-size:12px;color:#000;">画线方法</div>
<div style="position:absolute;left:1100px;top:64px;width:107px;height:25px;box-sizing:border-box;background:#fff;border:1px solid #7a7a7a;"></div>
<div style="position:absolute;left:1188px;top:64px;width:1px;height:25px;box-sizing:border-box;background:#9a9a9a;"></div>
<svg style="position:absolute;left:1193.5px;top:74.0px" width="9" height="5"><polygon points="0,0 8,0 4,4.5" fill="#8a8a8a"/></svg>
<div class="t" style="left:1104px;top:69.0px;font-size:12px;color:#000;">副图</div>
<div style="position:absolute;left:1214px;top:66px;width:62px;height:21px;box-sizing:border-box;background:linear-gradient(#fdfdfd,#e6e6e6);border:1px solid #6a6a6a;box-shadow:inset 1px 1px 0 #fff;"></div>
<div class="t" style="left:1214px;top:69.0px;width:62px;text-align:center;font-size:12px;color:#000">确&nbsp;&nbsp;定</div>
<div class="t" style="left:514px;top:92.5px;font-size:12px;color:#000;">公式描述</div>
<div style="position:absolute;left:571px;top:88px;width:219px;height:23px;box-sizing:border-box;background:#fff;border:1px solid #7a7a7a;"></div>
<div class="t" style="left:575px;top:91.5px;font-size:12px;color:#000;">公众号：程序化指标</div>
<div class="t" style="left:793px;top:91.5px;font-size:12px;color:#000;">版本</div>
<div style="position:absolute;left:824px;top:88px;width:36px;height:23px;box-sizing:border-box;background:#fff;border:1px solid #7a7a7a;"></div>
<div class="t" style="left:828px;top:91.5px;font-size:12px;color:#000;">0</div>
<div style="position:absolute;left:868px;top:98px;width:12px;height:12px;box-sizing:border-box;background:#fff;border-top:2px solid #787878;border-left:2px solid #787878;border-right:1px solid #e3e3e3;border-bottom:1px solid #e3e3e3;box-shadow:1px 1px 0 #fff;"></div>
<div class="t" style="left:886px;top:96.5px;font-size:12px;color:#000;">公式只用于PC</div>
<div style="position:absolute;left:974px;top:98px;width:12px;height:12px;box-sizing:border-box;background:#fff;border-top:2px solid #787878;border-left:2px solid #787878;border-right:1px solid #e3e3e3;border-bottom:1px solid #e3e3e3;box-shadow:1px 1px 0 #fff;"></div>
<div class="t" style="left:993px;top:96.5px;font-size:12px;color:#000;">云公式</div>
<div class="t" style="left:1042px;top:95.5px;font-size:12px;color:#000;">显示小数</div>
<div style="position:absolute;left:1100px;top:93px;width:107px;height:25px;box-sizing:border-box;background:#fff;border:1px solid #7a7a7a;"></div>
<div style="position:absolute;left:1188px;top:93px;width:1px;height:25px;box-sizing:border-box;background:#9a9a9a;"></div>
<svg style="position:absolute;left:1193.5px;top:103.0px" width="9" height="5"><polygon points="0,0 8,0 4,4.5" fill="#8a8a8a"/></svg>
<div class="t" style="left:1104px;top:98.0px;font-size:12px;color:#000;">缺省位数</div>
<div style="position:absolute;left:1214px;top:91px;width:62px;height:21px;box-sizing:border-box;background:linear-gradient(#fdfdfd,#e6e6e6);border:1px solid #6a6a6a;box-shadow:inset 1px 1px 0 #fff;"></div>
<div class="t" style="left:1214px;top:94.0px;width:62px;text-align:center;font-size:12px;color:#000">取&nbsp;&nbsp;消</div>
<div style="position:absolute;left:1214px;top:118px;width:62px;height:21px;box-sizing:border-box;background:linear-gradient(#fdfdfd,#e6e6e6);border:1px solid #6a6a6a;box-shadow:inset 1px 1px 0 #fff;"></div>
<div class="t" style="left:1214px;top:121.0px;width:62px;text-align:center;font-size:12px;color:#000">另存为</div>
<div style="position:absolute;left:512px;top:139px;width:342px;height:118px;box-sizing:border-box;border:1px solid #a8a8a8;border-top:1px solid #fff;border-left:1px solid #fff;box-shadow:1px 1px 0 #a0a0a0;"></div>
<div style="position:absolute;left:570px;top:117px;width:53px;height:22px;box-sizing:border-box;border:1px solid #fff;border-right:2px solid #8a8a8a;border-bottom:none;"></div>
<div style="position:absolute;left:623px;top:117px;width:64px;height:22px;box-sizing:border-box;border:1px solid #fff;border-right:2px solid #8a8a8a;border-bottom:none;"></div>
<div style="position:absolute;left:687px;top:117px;width:68px;height:22px;box-sizing:border-box;border:1px solid #fff;border-right:2px solid #8a8a8a;border-bottom:none;"></div>
<div style="position:absolute;left:513px;top:115px;width:57px;height:25px;box-sizing:border-box;background:#f0f0f0;border:1px solid #fff;border-right:2px solid #8a8a8a;border-bottom:none;"></div>
<div class="t" style="left:519px;top:118.5px;font-size:12px;color:#000;">参数1-4</div>
<div class="t" style="left:576px;top:121.5px;font-size:12px;color:#000;">参数5-8</div>
<div class="t" style="left:630px;top:121.5px;font-size:12px;color:#000;">参数9-12</div>
<div class="t" style="left:693px;top:121.5px;font-size:12px;color:#000;">参数13-16</div>
<div class="t" style="left:532px;top:139.5px;font-size:12px;color:#000;">参数</div>
<div class="t" style="left:605px;top:139.5px;font-size:12px;color:#000;">最小</div>
<div class="t" style="left:668px;top:139.5px;font-size:12px;color:#000;">最大</div>
<div class="t" style="left:733px;top:139.5px;font-size:12px;color:#000;">缺省</div>
<div class="t" style="left:520px;top:158.5px;font-size:12px;color:#000;">1</div>
<div style="position:absolute;left:529px;top:156px;width:68px;height:23px;box-sizing:border-box;background:#fff;border:1px solid #7a7a7a;"></div>
<div style="position:absolute;left:604px;top:156px;width:56px;height:23px;box-sizing:border-box;background:#fff;border:1px solid #7a7a7a;"></div>
<div style="position:absolute;left:667px;top:156px;width:56px;height:23px;box-sizing:border-box;background:#fff;border:1px solid #7a7a7a;"></div>
<div style="position:absolute;left:730px;top:156px;width:56px;height:23px;box-sizing:border-box;background:#fff;border:1px solid #7a7a7a;"></div>
<div class="t" style="left:520px;top:182.5px;font-size:12px;color:#000;">2</div>
<div style="position:absolute;left:529px;top:180px;width:68px;height:23px;box-sizing:border-box;background:#fff;border:1px solid #7a7a7a;"></div>
<div style="position:absolute;left:604px;top:180px;width:56px;height:23px;box-sizing:border-box;background:#fff;border:1px solid #7a7a7a;"></div>
<div style="position:absolute;left:667px;top:180px;width:56px;height:23px;box-sizing:border-box;background:#fff;border:1px solid #7a7a7a;"></div>
<div style="position:absolute;left:730px;top:180px;width:56px;height:23px;box-sizing:border-box;background:#fff;border:1px solid #7a7a7a;"></div>
<div class="t" style="left:520px;top:206.5px;font-size:12px;color:#000;">3</div>
<div style="position:absolute;left:529px;top:204px;width:68px;height:23px;box-sizing:border-box;background:#fff;border:1px solid #7a7a7a;"></div>
<div style="position:absolute;left:604px;top:204px;width:56px;height:23px;box-sizing:border-box;background:#fff;border:1px solid #7a7a7a;"></div>
<div style="position:absolute;left:667px;top:204px;width:56px;height:23px;box-sizing:border-box;background:#fff;border:1px solid #7a7a7a;"></div>
<div style="position:absolute;left:730px;top:204px;width:56px;height:23px;box-sizing:border-box;background:#fff;border:1px solid #7a7a7a;"></div>
<div class="t" style="left:520px;top:230.5px;font-size:12px;color:#000;">4</div>
<div style="position:absolute;left:529px;top:228px;width:68px;height:23px;box-sizing:border-box;background:#fff;border:1px solid #7a7a7a;"></div>
<div style="position:absolute;left:604px;top:228px;width:56px;height:23px;box-sizing:border-box;background:#fff;border:1px solid #7a7a7a;"></div>
<div style="position:absolute;left:667px;top:228px;width:56px;height:23px;box-sizing:border-box;background:#fff;border:1px solid #7a7a7a;"></div>
<div style="position:absolute;left:730px;top:228px;width:56px;height:23px;box-sizing:border-box;background:#fff;border:1px solid #7a7a7a;"></div>
<div class="t" style="left:868px;top:125.5px;font-size:12px;color:#000;">公式标签</div>
<div class="t" style="left:952px;top:125.5px;font-size:12px;color:#000;">交易法则</div>
<div class="t" style="left:1016px;top:124.5px;font-size:12px;color:#000;">坐标线位置,最多6个,用分号分隔</div>
<div style="position:absolute;left:868px;top:148px;width:77px;height:24px;box-sizing:border-box;background:#fff;border:1px solid #7a7a7a;"></div>
<div style="position:absolute;left:926px;top:148px;width:1px;height:24px;box-sizing:border-box;background:#9a9a9a;"></div>
<svg style="position:absolute;left:931.5px;top:157.5px" width="9" height="5"><polygon points="0,0 8,0 4,4.5" fill="#8a8a8a"/></svg>
<div class="t" style="left:872px;top:152.5px;font-size:12px;color:#000;">无</div>
<div style="position:absolute;left:952px;top:148px;width:57px;height:24px;box-sizing:border-box;background:#fff;border:1px solid #7a7a7a;"></div>
<div style="position:absolute;left:990px;top:148px;width:1px;height:24px;box-sizing:border-box;background:#9a9a9a;"></div>
<svg style="position:absolute;left:995.5px;top:157.5px" width="9" height="5"><polygon points="0,0 8,0 4,4.5" fill="#8a8a8a"/></svg>
<div class="t" style="left:956px;top:152.5px;font-size:12px;color:#000;">左侧</div>
<div style="position:absolute;left:1016px;top:146px;width:260px;height:23px;box-sizing:border-box;background:#fff;border:1px solid #7a7a7a;"></div>
<div class="t" style="left:1020px;top:148.5px;font-size:12px;color:#000;">自动</div>
<div style="position:absolute;left:946px;top:184px;width:329px;height:41px;box-sizing:border-box;border:1px solid #c8c8c8;box-shadow:inset 1px 1px 0 #fff;"></div>
<div class="t" style="left:952px;top:175.5px;font-size:12px;color:#000;background:#f0f0f0;padding:0 2px">额外Y轴分界</div>
<div class="t" style="left:955px;top:200.5px;font-size:12px;color:#000;">值1</div>
<div style="position:absolute;left:979px;top:196px;width:47px;height:23px;box-sizing:border-box;background:#fff;border:1px solid #7a7a7a;"></div>
<div class="t" style="left:1037px;top:200.5px;font-size:12px;color:#000;">值2</div>
<div style="position:absolute;left:1060px;top:196px;width:47px;height:23px;box-sizing:border-box;background:#fff;border:1px solid #7a7a7a;"></div>
<div class="t" style="left:1118px;top:200.5px;font-size:12px;color:#000;">值3</div>
<div style="position:absolute;left:1141px;top:196px;width:47px;height:23px;box-sizing:border-box;background:#fff;border:1px solid #7a7a7a;"></div>
<div class="t" style="left:1198px;top:200.5px;font-size:12px;color:#000;">值4</div>
<div style="position:absolute;left:1222px;top:196px;width:47px;height:23px;box-sizing:border-box;background:#fff;border:1px solid #7a7a7a;"></div>
<div style="position:absolute;left:868px;top:231px;width:62px;height:23px;box-sizing:border-box;background:linear-gradient(#fdfdfd,#e6e6e6);border:1px solid #6a6a6a;box-shadow:inset 1px 1px 0 #fff;"></div>
<div class="t" style="left:868px;top:235.0px;width:62px;text-align:center;font-size:12px;color:#000">AI写公式</div>
<div style="position:absolute;left:944px;top:231px;width:62px;height:23px;box-sizing:border-box;background:linear-gradient(#fdfdfd,#e6e6e6);border:1px solid #6a6a6a;box-shadow:inset 1px 1px 0 #fff;"></div>
<div class="t" style="left:944px;top:235.0px;width:62px;text-align:center;font-size:12px;color:#000">编辑操作</div>
<div style="position:absolute;left:1010px;top:231px;width:62px;height:23px;box-sizing:border-box;background:linear-gradient(#fdfdfd,#e6e6e6);border:1px solid #6a6a6a;box-shadow:inset 1px 1px 0 #fff;"></div>
<div class="t" style="left:1010px;top:235.0px;width:62px;text-align:center;font-size:12px;color:#000">插入函数</div>
<div style="position:absolute;left:1076px;top:231px;width:62px;height:23px;box-sizing:border-box;background:linear-gradient(#fdfdfd,#e6e6e6);border:1px solid #6a6a6a;box-shadow:inset 1px 1px 0 #fff;"></div>
<div class="t" style="left:1076px;top:235.0px;width:62px;text-align:center;font-size:12px;color:#000">插入资源</div>
<div style="position:absolute;left:1145px;top:231px;width:62px;height:23px;box-sizing:border-box;background:linear-gradient(#fdfdfd,#e6e6e6);border:1px solid #6a6a6a;box-shadow:inset 1px 1px 0 #fff;"></div>
<div class="t" style="left:1145px;top:235.0px;width:62px;text-align:center;font-size:12px;color:#a0a0a0">引入公式</div>
<div style="position:absolute;left:1213px;top:231px;width:62px;height:23px;box-sizing:border-box;background:linear-gradient(#fdfdfd,#e6e6e6);border:1px solid #6a6a6a;box-shadow:inset 1px 1px 0 #fff;"></div>
<div class="t" style="left:1213px;top:235.0px;width:62px;text-align:center;font-size:12px;color:#000">测试公式</div>
<div style="position:absolute;left:512px;top:261px;width:767px;height:339px;box-sizing:border-box;background:#f0f0f0;border:1px solid #8a8a8a;border-right:1px solid #c0c0c0;"></div>
<div style="position:absolute;left:513px;top:267px;width:750px;height:311px;box-sizing:border-box;background:#fff;"></div>
<div style="position:absolute;left:1263px;top:379px;width:14px;height:181px;box-sizing:border-box;background:#cdcdcd;"></div>
<svg style="position:absolute;left:1266px;top:272px" width="10" height="8"><polyline points="1.5,6.5 4.5,2.5 7.5,6.5" fill="none" stroke="#606060" stroke-width="2"/></svg>
<svg style="position:absolute;left:1266px;top:565px" width="10" height="8"><polyline points="1.5,1.5 4.5,5.5 7.5,1.5" fill="none" stroke="#606060" stroke-width="2"/></svg>
<svg style="position:absolute;left:518px;top:581px" width="9" height="10"><polyline points="6.5,1.5 2.5,4.5 6.5,7.5" fill="none" stroke="#b0b0b0" stroke-width="2"/></svg>
<svg style="position:absolute;left:1250px;top:581px" width="9" height="10"><polyline points="1.5,1.5 5.5,4.5 1.5,7.5" fill="none" stroke="#b0b0b0" stroke-width="2"/></svg>
<div class="cl" style="top:267px"><span class="cj" style="color:#000">强势区</span>: <span style="color:#008a00">IF</span>(<span class="cj" style="color:#000">趋势动量</span> &gt; <span style="color:#ff7800">50</span>, <span class="cj" style="color:#000">趋势动量</span>, <span style="color:#008a00">DRAWNULL</span>), <span style="color:#008a00">COLORRED</span>, <span style="color:#008a00">LINETHICK2</span>;</div>
<div class="cl" style="top:283px"><span class="cj" style="color:#000">弱势区</span>: <span style="color:#008a00">IF</span>(<span class="cj" style="color:#000">趋势动量</span> &lt; <span style="color:#ff7800">50</span>, <span class="cj" style="color:#000">趋势动量</span>, <span style="color:#008a00">DRAWNULL</span>), <span style="color:#008a00">COLORGREEN</span>, <span style="color:#008a00">LINETHICK2</span>;</div>
<div class="cl" style="top:299px"><span class="cj" style="color:#000">超卖线</span>: <span style="color:#ff7800">20</span>, <span style="color:#008a00">LINETHICK2</span>;</div>
<div class="cl" style="top:315px"><span class="cj" style="color:#000">中轴线</span>: <span style="color:#ff7800">50</span>, <span style="color:#008a00">LINETHICK2</span>;</div>
<div class="cl" style="top:331px"><span class="cj" style="color:#000">超买线</span>: <span style="color:#ff7800">80</span>, <span style="color:#008a00">COLORYELLOW</span>, <span style="color:#008a00">LINETHICK2</span>;</div>
<div class="cl" style="top:347px"><span class="cj" style="color:#000">前收盘</span> := <span style="color:#008a00">REF</span>(<span style="color:#008a00">C</span>, <span style="color:#ff7800">1</span>);</div>
<div class="cl" style="top:363px"><span class="cj" style="color:#000">涨幅部分</span> := <span style="color:#008a00">MAX</span>(<span style="color:#008a00">C</span> - <span class="cj" style="color:#000">前收盘</span>, <span style="color:#ff7800">0</span>);</div>
<div class="cl" style="top:379px"><span class="cj" style="color:#000">跌幅部分</span> := <span style="color:#008a00">MAX</span>(<span class="cj" style="color:#000">前收盘</span> - <span style="color:#008a00">C</span>, <span style="color:#ff7800">0</span>);</div>
<div class="cl" style="top:395px"><span class="cj" style="color:#000">绝对波动</span> := <span style="color:#008a00">ABS</span>(<span style="color:#008a00">C</span> - <span class="cj" style="color:#000">前收盘</span>);</div>
<div class="cl" style="top:411px"><span style="color:#000">RSI_</span><span class="cj" style="color:#000">长周期</span> := <span style="color:#008a00">SMA</span>(<span class="cj" style="color:#000">涨幅部分</span>, <span class="cj" style="color:#000">长期周期</span>, <span style="color:#ff7800">1</span>) / <span style="color:#008a00">SMA</span>(<span class="cj" style="color:#000">绝对波动</span>, <span class="cj" style="color:#000">长期周期</span>, <span style="color:#ff7800">1</span>) * <span style="color:#ff7800">100</span>;</div>
<div class="cl" style="top:427px"><span style="color:#000">RSI</span><span class="cj" style="color:#000">线</span>: <span style="color:#000">RSI_</span><span class="cj" style="color:#000">长周期</span>, <span style="color:#008a00">COLORYELLOW</span>, <span style="color:#008a00">LINETHICK2</span>;</div>
<div class="cl" style="top:443px"><span style="color:#008a00">DRAWBAND</span>(<span style="color:#000">RSI_</span><span class="cj" style="color:#000">长周期</span>, <span style="color:#008a00">RGB</span>(<span style="color:#ff7800">155</span>,<span style="color:#ff7800">50</span>,<span style="color:#ff7800">50</span>), <span style="color:#ff7800">50</span>, <span style="color:#008a00">RGB</span>(<span style="color:#ff7800">0</span>,<span style="color:#ff7800">100</span>,<span style="color:#ff7800">50</span>));</div>
<div class="cl" style="top:459px"><span style="color:#000">RSI_</span><span class="cj" style="color:#000">短周期</span> := <span style="color:#008a00">SMA</span>(<span class="cj" style="color:#000">涨幅部分</span>, <span class="cj" style="color:#000">短期周期</span>, <span style="color:#ff7800">1</span>) / <span style="color:#008a00">SMA</span>(<span class="cj" style="color:#000">绝对波动</span>, <span class="cj" style="color:#000">短期周期</span>, <span style="color:#ff7800">1</span>) * <span style="color:#ff7800">100</span>;</div>
<div class="cl" style="top:475px"><span style="color:#008a00">DRAWICON</span>(<span style="color:#008a00">CROSS</span>(<span class="cj" style="color:#000">趋势动量</span>, <span style="color:#ff7800">20</span>), <span style="color:#ff7800">20</span>, <span style="color:#ff7800">1</span>);</div>
<div class="cl" style="top:491px"><span style="color:#008a00">DRAWTEXT</span>(<span style="color:#008a00">CROSS</span>(<span class="cj" style="color:#000">趋势动量</span>, <span style="color:#ff7800">20</span>), <span style="color:#008a00">REF</span>(<span class="cj" style="color:#000">趋势动量</span>, <span style="color:#ff7800">1</span>), &#x27;<span class="cj" style="color:#1a80c8">机会</span>&#x27;), <span style="color:#008a00">COLORYELLOW</span>;</div>
<div class="cl" style="top:507px"><span style="color:#008a00">DRAWICON</span>(<span style="color:#008a00">CROSS</span>(<span style="color:#ff7800">80</span>, <span class="cj" style="color:#000">趋势动量</span>), <span style="color:#ff7800">80</span>, <span style="color:#ff7800">2</span>);</div>
<div class="cl" style="top:523px"><span style="color:#008a00">DRAWTEXT</span>(<span style="color:#008a00">CROSS</span>(<span style="color:#ff7800">80</span>, <span class="cj" style="color:#000">趋势动量</span>), <span style="color:#008a00">REF</span>(<span class="cj" style="color:#000">趋势动量</span>, <span style="color:#ff7800">1</span>), &#x27;<span class="cj" style="color:#000">风险</span>&#x27;), <span style="color:#008a00">COLORYELLOW</span>;</div>
<div style="position:absolute;left:512px;top:600px;width:707px;height:118px;box-sizing:border-box;background:#fff;border:1px solid #8a8a8a;border-left:1px solid #a0a0a0;"></div>
<div style="position:absolute;left:1200px;top:601px;width:18px;height:116px;box-sizing:border-box;background:#f4f3f2;"></div>
<div class="t" style="left:517px;top:603.5px;font-size:12px;color:#000;">测试通过! 代码长度:1174,输出线个数:14</div>
<div style="position:absolute;left:1222px;top:601px;width:55px;height:24px;box-sizing:border-box;background:linear-gradient(#f6f6f6,#e8e8e8);border:1px solid #6a6a6a;border-top:1px solid #e8e8e8;border-left:1px solid #e8e8e8;box-shadow:inset -1px -1px 0 #a0a0a0;"></div>
<div class="t" style="left:1222px;top:605.5px;width:55px;text-align:center;font-size:12px;color:#000">动态翻译</div>
<div style="position:absolute;left:1222px;top:628px;width:55px;height:24px;box-sizing:border-box;background:#f4f4f4;border:1px solid #6a6a6a;border-top:2px solid #5a5a5a;border-left:2px solid #5a5a5a;"></div>
<div class="t" style="left:1222px;top:632.5px;width:55px;text-align:center;font-size:12px;color:#000">测试结果</div>
<div style="position:absolute;left:1222px;top:656px;width:55px;height:25px;box-sizing:border-box;background:linear-gradient(#f6f6f6,#e8e8e8);border:1px solid #6a6a6a;border-top:1px solid #e8e8e8;border-left:1px solid #e8e8e8;box-shadow:inset -1px -1px 0 #a0a0a0;"></div>
<div class="t" style="left:1222px;top:661.0px;width:55px;text-align:center;font-size:12px;color:#000">参数精灵</div>
<div style="position:absolute;left:1222px;top:684px;width:55px;height:25px;box-sizing:border-box;background:linear-gradient(#f6f6f6,#e8e8e8);border:1px solid #6a6a6a;border-top:1px solid #e8e8e8;border-left:1px solid #e8e8e8;box-shadow:inset -1px -1px 0 #a0a0a0;"></div>
<div class="t" style="left:1222px;top:689.0px;width:55px;text-align:center;font-size:12px;color:#000">用法注释</div></body></html>
